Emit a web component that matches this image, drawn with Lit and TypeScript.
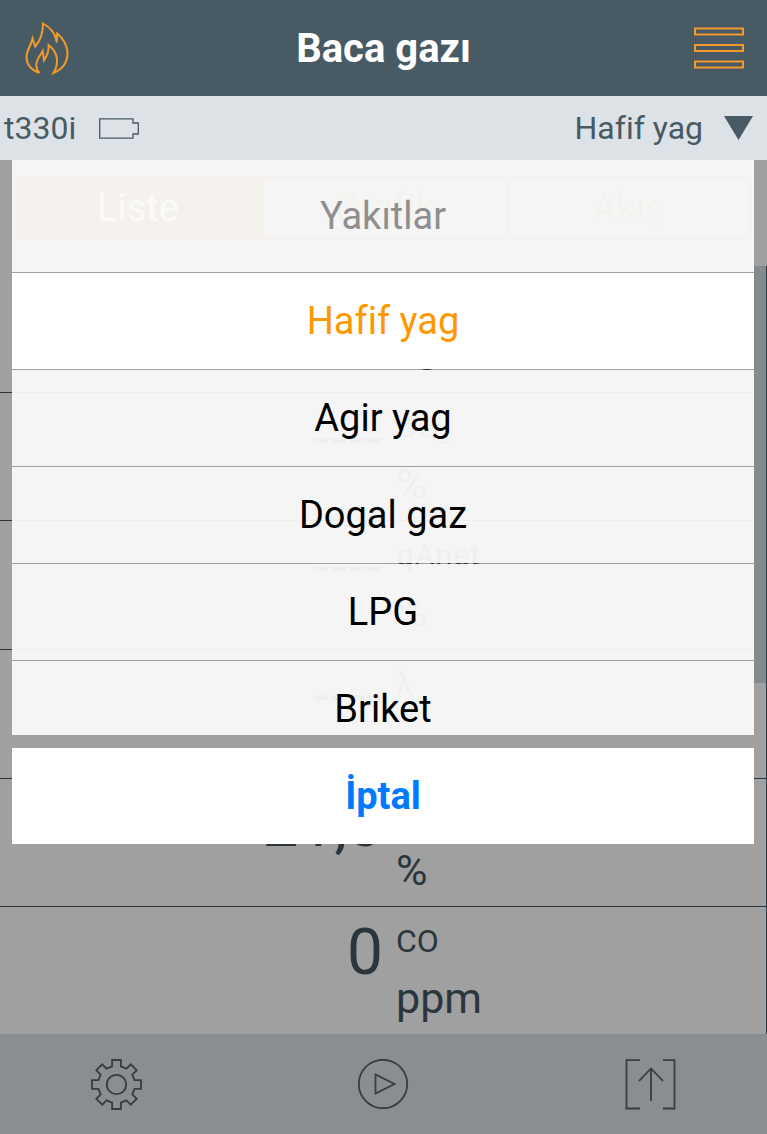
import { LitElement, html, css, svg } from "lit";
import { customElement, state } from "lit/decorators.js";

interface Reading {
  value: string;
  label: unknown;
  unit: string;
}

const READINGS: Reading[] = [
  { value: "", label: "", unit: "°C" },
  { value: "----", label: html`CO<span class="sub">2</span>`, unit: "%" },
  { value: "----", label: "qAnet", unit: "%" },
  { value: "----", label: "λ", unit: "" },
  { value: "21,0", label: "", unit: "%" },
  { value: "0", label: "CO", unit: "ppm" },
];

const FUELS = ["Hafif yag", "Agir yag", "Dogal gaz", "LPG", "Briket"];

const flameIcon = svg`
  <path d="M19.300 57C10 53.500 6.500 47.500 6.500 41C6.500 34 10.500 31 12.600 22.500L15.200 30.500C20 25 23 19 23 7.500C30 11.500 35 16 36.800 26.500L37.200 17.500C43 22 47.500 30 47.500 37C47.500 46.500 42 53.500 33.500 57C36 53 37.300 48 37 43C36.500 37 33 32.500 28.600 29C29 35 27 40 24 44.500L22.700 35C20 39.500 16.300 43.500 16.300 49C16.300 52 17.500 55 19.300 57Z"/>`;

@customElement("app-root")
export class AppRoot extends LitElement {
  @state() private fuel = FUELS[0];

  static styles = css`
    :host {
      display: grid;
      grid-template-rows: 96px 64px 874px 100px;
      position: relative;
      width: 767px;
      height: 1134px;
      overflow: hidden;
      background: #a0a0a0;
      color: #2b363c;
      font-family: Roboto, sans-serif;
      font-variant-ligatures: none;
    }
    svg {
      display: block;
      fill: none;
    }
    .header {
      display: grid;
      grid-template-columns: 94px 1fr 94px;
      align-items: center;
      background: #485a64;
      color: #fff;
    }
    .title {
      margin: 0;
      padding-top: 2px;
      text-align: center;
      font-size: 40px;
      line-height: 48px;
      font-weight: 700;
    }
    .flame {
      margin-left: 20px;
      stroke: #f1992a;
      stroke-width: 2;
    }
    .menu {
      margin-left: 21px;
      stroke: #f1992a;
      stroke-width: 2;
    }
    .status {
      display: flex;
      align-items: center;
      padding: 0 14px 0 4px;
      background: #dde2e6;
      color: #485a64;
      font-size: 32px;
      line-height: 40px;
    }
    .battery {
      margin-left: 23px;
      stroke: #485a64;
      stroke-width: 1.3;
    }
    .fuel {
      margin-left: auto;
    }
    .caret {
      margin-left: 21px;
      fill: #485a64;
    }
    .content {
      display: flex;
      flex-direction: column;
      overflow: hidden;
    }
    .tabs {
      display: grid;
      grid-template-columns: 244px 245px 1fr;
      flex: none;
      box-sizing: border-box;
      height: 64px;
      margin: 16px 16px 24px 15px;
      border: 2px solid #9f6400;
      border-radius: 8px;
      overflow: hidden;
      color: #9f6400;
      font-size: 38px;
      line-height: 61px;
      text-align: center;
    }
    .tab + .tab {
      border-left: 2px solid #9f6400;
    }
    .tab.on {
      background: #9f6400;
      color: #eee;
      text-indent: -2px;
    }
    .list {
      position: relative;
      flex: none;
    }
    .row {
      display: grid;
      grid-template-columns: 383px 1fr;
      column-gap: 13px;
      box-sizing: border-box;
      height: 128.650px;
      border-bottom: 1px solid #2b3437;
    }
    .value {
      padding-top: 14px;
      text-align: right;
      font-size: 64px;
      line-height: 64px;
    }
    .label {
      height: 40px;
      padding-top: 14px;
      font-size: 32px;
      line-height: 40px;
    }
    .sub {
      position: relative;
      top: 5px;
      font-size: 20px;
    }
    .unit {
      margin-top: 13px;
      font-size: 43px;
      line-height: 48px;
    }
    .scroll {
      position: absolute;
      top: 2px;
      right: 0;
      width: 12px;
      height: 768px;
      border-right: 1px solid #2b3a42;
    }
    .thumb {
      height: 417px;
      background: #858a8e;
    }
    .footer {
      display: flex;
      align-items: center;
      justify-content: space-between;
      padding: 0 91.500px 0 91px;
      background: #8a8e91;
      stroke: #343e43;
      stroke-width: 1.800;
    }
    .sheet {
      position: absolute;
      top: 160px;
      left: 12px;
      width: 742px;
      font-size: 38px;
      text-align: center;
    }
    .options {
      display: flex;
      flex-direction: column;
      gap: 1px;
      height: 575px;
      overflow: hidden;
      margin-bottom: 13px;
    }
    .head {
      flex: none;
      height: 112px;
      line-height: 113px;
      background: rgba(250, 250, 250, 0.95);
      color: #8f8f8f;
    }
    .option {
      flex: none;
      height: 96px;
      line-height: 97px;
      background: rgba(250, 250, 250, 0.95);
      color: #000;
    }
    .option.on {
      background: #fff;
      color: #ff9800;
    }
    .cancel {
      height: 96px;
      line-height: 97px;
      background: #fff;
      color: #007aff;
      font-weight: 700;
    }
  `;

  render() {
    return html`
      <header class="header">
        <svg class="flame" width="54" height="64" viewBox="0 0 54 64">${flameIcon}</svg>
        <h1 class="title">Baca gazı</h1>
        <svg class="menu" width="50" height="42" viewBox="0 0 50 42">
          <path d="M1 1.500H49V7.500H1ZM1 18H49V24H1ZM1 34.500H49V40.500H1Z" />
        </svg>
      </header>
      <div class="status">
        <span>t330i</span>
        <svg class="battery" width="40" height="21" viewBox="0 0 40 21">
          <path d="M.7 .8H34V5H39.300V16H34V20.200H.7Z" />
        </svg>
        <span class="fuel">${this.fuel}</span>
        <svg class="caret" width="29" height="24" viewBox="0 0 29 24">
          <path d="M0 0H29L14.500 24Z" />
        </svg>
      </div>
      <main class="content">
        <div class="tabs">
          <div class="tab on">Liste</div>
          <div class="tab">Grafik</div>
          <div class="tab">Akış</div>
        </div>
        <div class="list">
          ${READINGS.map(
            (r) => html`<div class="row">
              <div class="value">${r.value}</div>
              <div>
                <div class="label">${r.label}</div>
                <div class="unit">${r.unit}</div>
              </div>
            </div>`
          )}
          <div class="scroll"><div class="thumb"></div></div>
        </div>
      </main>
      <footer class="footer">
        <svg width="51" height="51" viewBox="0 0 50 50">
          <path d="M20.700 1H29.300V7.300L34.700 9.500L39 5.200L44.800 11L40.500 15.300L42.700 20.700H49V29.300H42.700L40.500 34.700L44.800 39L39 44.800L34.700 40.500L29.300 42.700V49H20.700V42.700L15.300 40.500L11 44.800L5.200 39L9.500 34.700L7.300 29.300H1V20.700H7.300L9.500 15.300L5.200 11L11 5.200L15.300 9.500L20.700 7.300Z" />
          <circle cx="25" cy="25" r="9.500" />
        </svg>
        <svg width="51" height="50" viewBox="0 0 51 50">
          <circle cx="25" cy="25" r="24.200" />
          <path d="M17.500 15.500V34.500L36.500 25Z" />
        </svg>
        <svg width="51" height="51" viewBox="0 0 51 51">
          <path d="M15 1.200H1.500V49.500H15M38 1.200H49.500V49.500H38M26 42V9.500M14 22L26 9.500L38 22" />
        </svg>
      </footer>
      <div class="sheet">
        <div class="options">
          <div class="head">Yakıtlar</div>
          ${FUELS.map(
            (f) => html`<div
              class="option ${f === this.fuel ? "on" : ""}"
              @click=${() => (this.fuel = f)}
            >
              ${f}
            </div>`
          )}
        </div>
        <div class="cancel">İptal</div>
      </div>
    `;
  }
}
